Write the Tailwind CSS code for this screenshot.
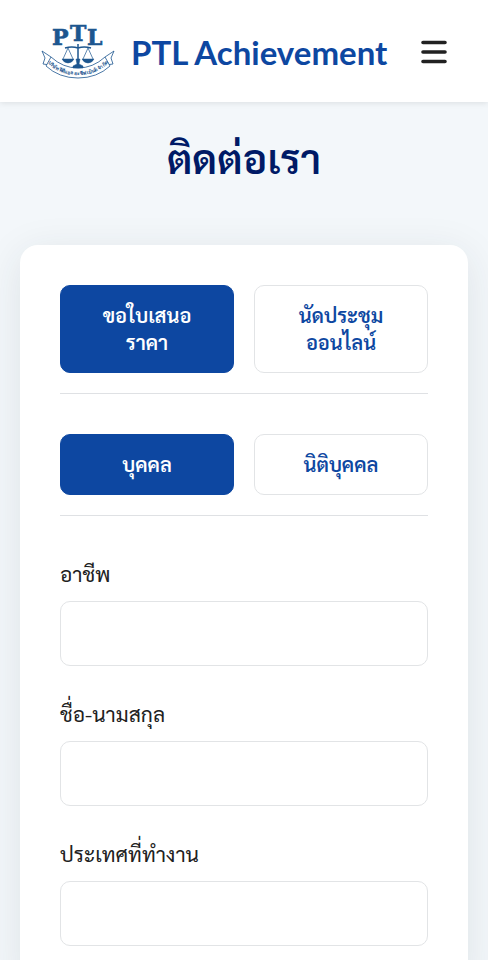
<!DOCTYPE html>
<html lang="th">
<head>
    <meta charset="UTF-8">
    <meta name="viewport" content="width=device-width, initial-scale=1.0">
    <title>PTL Achievement</title>
    <script src="https://cdn.jsdelivr.net/npm/@tailwindcss/browser@4"></script>
</head>
<body class="bg-[#f3f7fa] text-[#212121] font-[Sarabun,'Noto_Looped_Thai','Noto_Sans_Thai',Lato,sans-serif]">
    <header class="flex items-center justify-between h-[102px] pt-0.5 pl-[41px] pr-10 bg-white shadow-[0_1px_6px_rgba(0,0,0,0.10)]">
        <a href="#" class="flex items-center gap-4 font-[Lato,sans-serif]">
            <svg class="w-[74px] h-14 overflow-visible" viewBox="0 0 74 56" fill="none" stroke="#1d568f" role="img" aria-label="PTL">
                <!-- Ribbon -->
                <path d="M10 33L1 27l3 7-2 6 7 1M64 33l9-6-3 7 2 6-7 1" fill="#fff" stroke-width=".8"/>
                <path d="M10 33Q22 44 37 44T64 33L69 42Q56 54 37 54T5 42z" fill="#fff" stroke-width=".8"/>
                <path id="ribbon" d="M7 39Q19 51 37 51T67 39" stroke="none"/>
                <text fill="#1d568f" stroke="none" font-size="5" font-weight="bold" text-anchor="middle">
                    <textPath href="#ribbon" startOffset="50%">บริษัท พีทีแอล อะชีฟเม้นต์ จำกัด</textPath>
                </text>
                <!-- Scales -->
                <path d="M37 20v21M24 24q7-2 13 0 6-2 13 0" stroke-width="1.5"/>
                <path d="M27 24l-5 11M27 24l5 11M47 24l-5 11M47 24l5 11" stroke-width=".7"/>
                <path d="M21 35h12q-2 4-6 4t-6-4zM41 35h12q-2 4-6 4t-6-4zM35 35h4l-1 5 4 2v2H32v-2l4-2z" fill="#1d568f" stroke-width=".5"/>
                <!-- Lettering -->
                <g fill="#1d568f" stroke-width=".6" font-family="DejaVu Serif, serif" font-weight="bold" font-size="22">
                    <text x="11" y="21">P</text>
                    <text x="29" y="17">T</text>
                    <text x="46" y="21">L</text>
                </g>
            </svg>
            <span class="text-[33px] leading-10 font-bold whitespace-nowrap text-[#0d47a1]">PTL Achievement</span>
        </a>
        <button type="button" aria-label="เมนู" class="flex">
            <svg class="w-7 h-7" viewBox="0 0 28 28" stroke="#212121" stroke-width="3.6" stroke-linecap="round">
                <path d="M3 4.500h22M3 14h22M3 23.500h22"/>
            </svg>
        </button>
    </header>

    <main class="px-5">
        <h1 class="pt-[25px] pb-[58px] text-center text-[41px] leading-[60px] font-semibold text-[#001a66]">ติดต่อเรา</h1>

        <form class="rounded-[18px] bg-white p-10 shadow-[0_8px_40px_rgba(38,50,56,0.10)]">
            <div class="grid grid-cols-2 gap-5 pb-5 border-b border-[#dfe1e4] text-[20px] leading-[27px] font-semibold">
                <button type="button" class="px-6 py-4 rounded-[10px] border border-[#0d47a1] bg-[#0d47a1] text-white">ขอใบเสนอ<br>ราคา</button>
                <button type="button" class="px-6 py-4 rounded-[10px] border border-[#e2e4e6] text-[#0d47a1]">นัดประชุม<br>ออนไลน์</button>
            </div>

            <div class="grid grid-cols-2 gap-5 py-5 mt-5 border-b border-[#dfe1e4] text-[20px] leading-[27px] font-semibold">
                <button type="button" class="px-6 py-4 rounded-[10px] border border-[#0d47a1] bg-[#0d47a1] text-white">บุคคล</button>
                <button type="button" class="px-6 py-4 rounded-[10px] border border-[#e2e4e6] text-[#0d47a1]">นิติบุคคล</button>
            </div>

            <div class="flex flex-col gap-[30px] pt-10 text-[21px]">
                <div>
                    <label for="occupation" class="block mb-[9px] leading-9">อาชีพ</label>
                    <input type="text" id="occupation" class="block w-full h-[65px] px-4 rounded-[10px] border border-[#e2e4e6]">
                </div>
                <div>
                    <label for="fullName" class="block mb-[9px] leading-9">ชื่อ-นามสกุล</label>
                    <input type="text" id="fullName" class="block w-full h-[65px] px-4 rounded-[10px] border border-[#e2e4e6]">
                </div>
                <div>
                    <label for="country" class="block mb-[9px] leading-9">ประเทศที่ทำงาน</label>
                    <input type="text" id="country" class="block w-full h-[65px] px-4 rounded-[10px] border border-[#e2e4e6]">
                </div>
            </div>
        </form>
    </main>
</body>
</html>
